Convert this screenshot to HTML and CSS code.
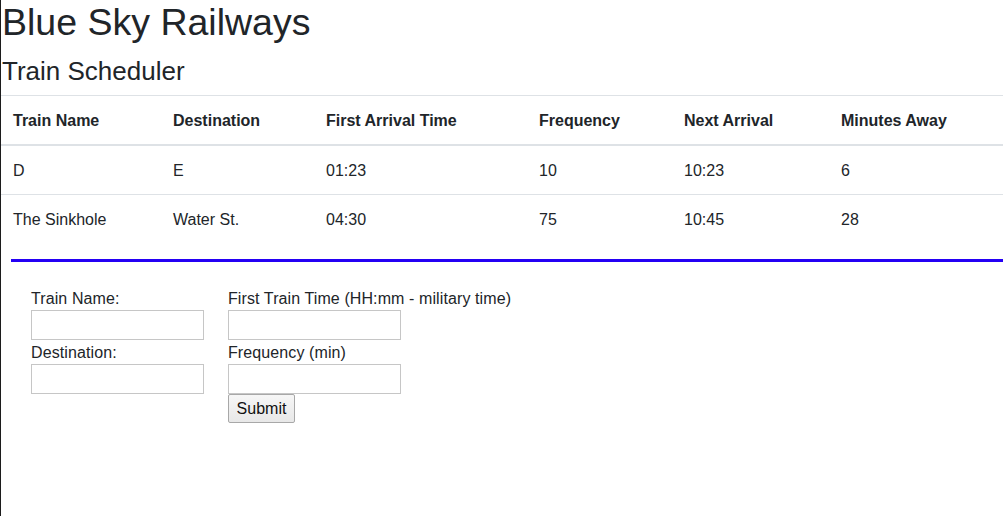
FILE: index.html
```html
<!DOCTYPE html>
<html lang="en">
<head>
<meta charset="utf-8">
<title>Blue Sky Railways</title>
<link rel="stylesheet" href="styles.css">
</head>
<body>
<div class="page">
  <h1 class="title">Blue Sky Railways</h1>
  <h3 class="subtitle">Train Scheduler</h3>
  <table class="schedule">
    <colgroup>
      <col class="c1"><col class="c2"><col class="c3"><col class="c4"><col class="c5"><col class="c6">
    </colgroup>
    <thead>
      <tr>
        <th>Train Name</th>
        <th>Destination</th>
        <th>First Arrival Time</th>
        <th>Frequency</th>
        <th>Next Arrival</th>
        <th>Minutes Away</th>
      </tr>
    </thead>
    <tbody>
      <tr>
        <td>D</td>
        <td>E</td>
        <td>01:23</td>
        <td>10</td>
        <td>10:23</td>
        <td>6</td>
      </tr>
      <tr>
        <td>The Sinkhole</td>
        <td>Water St.</td>
        <td>04:30</td>
        <td>75</td>
        <td>10:45</td>
        <td>28</td>
      </tr>
    </tbody>
  </table>
  <div class="divider"></div>
  <form class="train-form">
    <div class="form-col">
      <label class="field-label" for="name">Train Name:</label>
      <input class="field" id="name" type="text">
      <label class="field-label" for="dest">Destination:</label>
      <input class="field" id="dest" type="text">
    </div>
    <div class="form-col">
      <label class="field-label" for="first">First Train Time (HH:mm - military time)</label>
      <input class="field" id="first" type="text">
      <label class="field-label" for="freq">Frequency (min)</label>
      <input class="field" id="freq" type="text">
      <button class="submit" type="button">Submit</button>
    </div>
  </form>
</div>
</body>
</html>
```

FILE: styles.css
```css
html, body {
  margin: 0;
  padding: 0;
}

body {
  background: #ffffff;
  color: #212529;
  font-family: "Liberation Sans", Arial, sans-serif;
  font-size: 16px;
  line-height: 24px;
}

.page {
  min-height: 516px;
  border-left: 1px solid #1c1c1c;
  box-sizing: border-box;
}

.title {
  margin: 0 0 11px 0;
  font-size: 37.5px;
  line-height: 45px;
  font-weight: 400;
  padding-left: 1px;
}

.subtitle {
  margin: 0 0 8px 0;
  font-size: 26px;
  line-height: 31px;
  font-weight: 400;
  padding-left: 1px;
}

.schedule {
  width: 100%;
  border-collapse: collapse;
  table-layout: fixed;
  margin-bottom: 16px;
}

.c1 { width: 160px; }
.c2 { width: 153px; }
.c3 { width: 213px; }
.c4 { width: 145px; }
.c5 { width: 157px; }
.c6 { width: 174px; }

.schedule th,
.schedule td {
  padding: 13px 12px 11px 12px;
  text-align: left;
  vertical-align: top;
  border-top: 1px solid #dee2e6;
  line-height: 24px;
  white-space: nowrap;
}

.schedule th {
  font-weight: 700;
  border-bottom: 2px solid #dee2e6;
}

.divider {
  height: 3px;
  margin-left: 10px;
  background: #2400f4;
}

.train-form {
  display: flex;
  gap: 24px;
  padding: 24px 0 0 30px;
}

.form-col {
  display: flex;
  flex-direction: column;
  align-items: flex-start;
}

.field-label {
  display: block;
  line-height: 22px;
  padding-top: 2px;
  font-size: 16px;
  letter-spacing: 0.1px;
  color: #212529;
}

.field {
  width: 173px;
  height: 30px;
  box-sizing: border-box;
  border: 1px solid #c6c6c6;
  margin: 0;
  padding: 2px 4px;
  font-family: inherit;
  font-size: 16px;
  background: #fff;
}

.submit {
  width: 67px;
  height: 29px;
  box-sizing: border-box;
  margin: 0;
  padding: 0;
  border: 1px solid #a8a8a8;
  border-radius: 2px;
  background: linear-gradient(#f6f6f6, #e8e8e8);
  color: #111;
  font-family: "Liberation Sans", Arial, sans-serif;
  font-size: 16px;
  line-height: 27px;
}
```
